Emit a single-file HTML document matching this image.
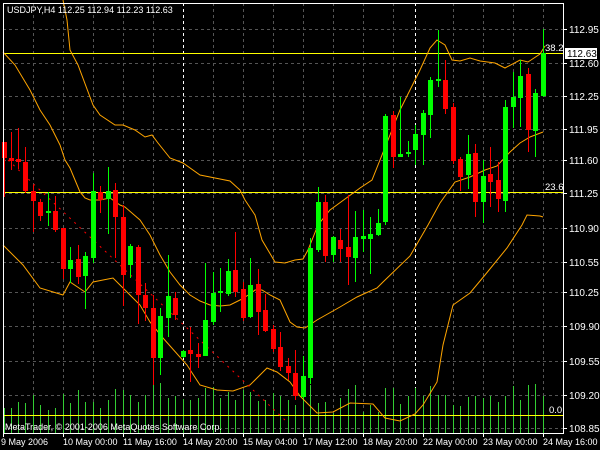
<!DOCTYPE html>
<html><head><meta charset="utf-8"><style>
html,body{margin:0;padding:0;background:#000;width:600px;height:450px;overflow:hidden}
svg{display:block}
text{font-family:"Liberation Sans",sans-serif;fill:#fff}
</style></head><body>
<svg width="600" height="450" viewBox="0 0 600 450" xmlns="http://www.w3.org/2000/svg">
<rect width="600" height="450" fill="#000"/>
<g stroke="#555" stroke-width="1" stroke-dasharray="3,3" shape-rendering="crispEdges">
<path d="M3 29.5H563M3 63.5H563M3 96.5H563M3 129.5H563M3 160.5H563M3 193.5H563M3 228.5H563M3 262.5H563M3 292.5H563M3 326.5H563M3 361.5H563M3 395.5H563M3 428.5H563"/>
<path d="M33.5 3V433M63.5 3V433M93.5 3V433M123.5 3V433M153.5 3V433M213.5 3V433M243.5 3V433M273.5 3V433M303.5 3V433M333.5 3V433M363.5 3V433M393.5 3V433M453.5 3V433M483.5 3V433M513.5 3V433M543.5 3V433"/>
</g>
<g stroke="#fff" stroke-width="1" stroke-dasharray="3,3" shape-rendering="crispEdges">
<path d="M183.5 3V433M415.5 3V433"/>
</g>
<g stroke="#32cd32" stroke-width="1" shape-rendering="crispEdges">
<path d="M4.5 408V433M11.5 408V433M18.5 402V433M25.5 403V433M33.5 395V433M40.5 405V433M48.5 410V433M55.5 408V433M63.5 394V433M70.5 403V433M78.5 390V433M85.5 402V433M93.5 402V433M100.5 408V433M108.5 400V433M115.5 389V433M123.5 390V433M130.5 395V433M138.5 402V433M145.5 395V433M153.5 383V433M160.5 383V433M168.5 398V433M175.5 396V433M183.5 399V433M190.5 400V433M198.5 398V433M205.5 388V433M213.5 387V433M220.5 398V433M228.5 392V433M235.5 400V433M243.5 390V433M250.5 392V433M258.5 401V433M265.5 400V433M273.5 393V433M280.5 396V433M288.5 400V433M295.5 405V433M303.5 356V433M310.5 385V433M318.5 403V433M325.5 402V433M333.5 413V433M340.5 398V433M348.5 389V433M355.5 385V433M363.5 412V433M370.5 405V433M378.5 412V433M385.5 388V433M393.5 388V433M400.5 404V433M408.5 396V433M415.5 388V433M423.5 396V433M430.5 386V433M438.5 395V433M445.5 395V433M453.5 405V433M460.5 406V433M468.5 397V433M475.5 396V433M483.5 398V433M490.5 396V433M498.5 402V433M505.5 396V433M513.5 386V433M520.5 400V433M528.5 385V433M535.5 384V433M543.5 396V433"/>
</g>
<g stroke="#ffff00" stroke-width="1" shape-rendering="crispEdges">
<path d="M3 53.5H563M3 192.5H563M3 415.5H563"/>
</g>
<g fill="none" stroke="#ffa500" stroke-width="1">
<polyline points="63,0 67,20 70,50 78,65 93,105 100,115 115,125 123,125 135,130 145,137 152,135 158,143 170,158 183,163 200,175 215,178 230,181 240,190 245,200 255,215 262,240 275,262 285,263 295,260 303,259 308,250 318,225 330,210 345,199 360,188 372,180 380,160 390,135 400,110 410,90 420,70 430,48 437,40 445,45 452,60 460,61 470,58 480,61 495,63 505,68 520,60 528,62 540,54 545,46"/>
<polyline points="3,52 15,65 30,90 40,110 50,125 60,145 65,160 70,168 75,180 80,192 85,198 90,200 100,200 110,198 120,205 125,207 140,220 150,235 160,255 170,272 180,285 183,288 190,295 200,301 210,305 220,306 230,305 240,300 250,294 255,290 262,290 270,295 280,300 290,322 297,327 305,328 317,320 340,307 357,297 377,288 383,282 410,256 428,225 440,203 455,182 470,177 485,170 497,166 510,152 520,143 530,137 543,132"/>
<polyline points="3,245 23,265 40,288 63,295 70,282 85,292 93,282 113,278 123,288 140,305 150,322 163,338 187,365 200,385 217,390 233,391 250,385 267,368 277,372 290,382 300,396 317,413 333,412 350,403 373,404 385,418 400,421 415,414 423,405 437,382 443,345 448,325 453,305 470,293 485,275 507,248 522,225 527,215 540,216 543,217"/>
</g>
<line x1="8" y1="160" x2="285" y2="420" stroke="#ff0000" stroke-width="1" stroke-dasharray="2,5"/>
<g stroke-width="1" shape-rendering="crispEdges">
<g stroke="#ff0000" fill="#ff0000">
<path d="M4.5 142V197M11.5 132V170M18.5 128V169M25.5 147V193M33.5 185V232M40.5 199V221M55.5 196V232M63.5 228V279M78.5 245V284M100.5 186V213M115.5 183V258M123.5 205V306M138.5 245V324M145.5 283V321M153.5 295V385M175.5 292V320M190.5 327V382M198.5 343V368M235.5 232V297M243.5 282V321M258.5 269V335M265.5 294V332M273.5 325V352M280.5 332V371M288.5 358V380M295.5 350V400M325.5 195V262M340.5 229V262M348.5 195V285M393.5 111V168M445.5 60V114M453.5 103V164M460.5 157V191M475.5 144V217M490.5 147V207M498.5 162V212M528.5 68V152"/>
</g>
<g stroke="#00ff00" fill="#00ff00">
<path d="M48.5 192V226M70.5 247V283M85.5 252V309M93.5 173V263M108.5 167V234M130.5 244V278M160.5 308V375M168.5 255V337M183.5 350V358M205.5 263V356M213.5 272V325M220.5 268V312M228.5 259V296M250.5 258V318M303.5 356V399M310.5 238V384M318.5 187V252M333.5 236V262M355.5 211V282M363.5 210V252M370.5 217V274M378.5 209V236M385.5 114V225M400.5 97V157M408.5 141V157M415.5 125V165M423.5 110V165M430.5 77V138M438.5 30V87M468.5 135V189M483.5 160V223M505.5 100V212M513.5 72V128M520.5 60V127M535.5 89V157M543.5 29V97"/>
</g>
<g fill="#ff0000">
<rect x="2" y="142" width="5" height="16"/><rect x="9" y="158" width="5" height="3"/><rect x="16" y="159" width="5" height="3"/><rect x="23" y="162" width="5" height="29"/><rect x="31" y="191" width="5" height="10"/><rect x="38" y="202" width="5" height="14"/><rect x="53" y="211" width="5" height="19"/><rect x="61" y="228" width="5" height="41"/><rect x="76" y="259" width="5" height="18"/><rect x="98" y="192" width="5" height="8"/><rect x="113" y="190" width="5" height="27"/><rect x="121" y="217" width="5" height="58"/><rect x="136" y="247" width="5" height="48"/><rect x="143" y="295" width="5" height="13"/><rect x="151" y="308" width="5" height="50"/><rect x="173" y="298" width="5" height="17"/><rect x="188" y="350" width="5" height="4"/><rect x="196" y="354" width="5" height="3"/><rect x="233" y="270" width="5" height="22"/><rect x="241" y="289" width="5" height="29"/><rect x="256" y="284" width="5" height="28"/><rect x="263" y="310" width="5" height="21"/><rect x="271" y="329" width="5" height="20"/><rect x="278" y="347" width="5" height="20"/><rect x="286" y="366" width="5" height="7"/><rect x="293" y="373" width="5" height="23"/><rect x="323" y="202" width="5" height="54"/><rect x="338" y="240" width="5" height="9"/><rect x="346" y="247" width="5" height="10"/><rect x="391" y="115" width="5" height="42"/><rect x="443" y="80" width="5" height="29"/><rect x="451" y="107" width="5" height="54"/><rect x="458" y="159" width="5" height="18"/><rect x="473" y="153" width="5" height="49"/><rect x="488" y="174" width="5" height="8"/><rect x="496" y="180" width="5" height="19"/><rect x="526" y="74" width="5" height="56"/>
</g>
<g fill="#00ff00">
<rect x="46" y="211" width="5" height="2"/><rect x="68" y="260" width="5" height="9"/><rect x="83" y="256" width="5" height="20"/><rect x="91" y="191" width="5" height="67"/><rect x="106" y="191" width="5" height="8"/><rect x="128" y="246" width="5" height="19"/><rect x="158" y="316" width="5" height="42"/><rect x="166" y="296" width="5" height="22"/><rect x="181" y="351" width="5" height="6"/><rect x="203" y="320" width="5" height="36"/><rect x="211" y="293" width="5" height="29"/><rect x="218" y="291" width="5" height="2"/><rect x="226" y="271" width="5" height="23"/><rect x="248" y="285" width="5" height="32"/><rect x="301" y="376" width="5" height="21"/><rect x="308" y="248" width="5" height="130"/><rect x="316" y="202" width="5" height="48"/><rect x="331" y="237" width="5" height="18"/><rect x="353" y="237" width="5" height="21"/><rect x="361" y="236" width="5" height="3"/><rect x="368" y="234" width="5" height="5"/><rect x="376" y="223" width="5" height="12"/><rect x="383" y="116" width="5" height="106"/><rect x="398" y="154" width="5" height="3"/><rect x="406" y="152" width="5" height="2"/><rect x="413" y="134" width="5" height="16"/><rect x="421" y="113" width="5" height="22"/><rect x="428" y="80" width="5" height="35"/><rect x="436" y="79" width="5" height="2"/><rect x="466" y="154" width="5" height="21"/><rect x="481" y="176" width="5" height="26"/><rect x="503" y="107" width="5" height="94"/><rect x="511" y="97" width="5" height="10"/><rect x="518" y="76" width="5" height="22"/><rect x="533" y="93" width="5" height="38"/><rect x="541" y="53" width="5" height="43"/>
</g>
</g>
<g stroke="#fff" stroke-width="1" fill="none" shape-rendering="crispEdges">
<path d="M3.5 3V433.5H563.5V3.5H3"/>
<path d="M3.5 433V437M63.5 433V437M123.5 433V437M183.5 433V437M243.5 433V437M303.5 433V437M363.5 433V437M423.5 433V437M483.5 433V437M543.5 433V437"/>
<path d="M563 29.5H567M563 63.5H567M563 96.5H567M563 129.5H567M563 160.5H567M563 193.5H567M563 228.5H567M563 262.5H567M563 292.5H567M563 326.5H567M563 361.5H567M563 395.5H567M563 428.5H567"/>
</g>
<text x="7" y="13" font-size="9">USDJPY,H4  112.25 112.94 112.23 112.63</text>
<text x="5" y="430" font-size="9">MetaTrader, © 2001-2006 MetaQuotes Software Corp.</text>
<g font-size="9.5">
<text x="545" y="51">38.2</text><text x="545" y="190">23.6</text><text x="549" y="413">0.0</text>
</g>
<g font-size="10">
<text x="569" y="33">112.95</text>
<text x="569" y="67">112.60</text>
<text x="569" y="100">112.25</text>
<text x="569" y="133">111.95</text>
<text x="569" y="164">111.60</text>
<text x="569" y="197">111.25</text>
<text x="569" y="232">110.90</text>
<text x="569" y="266">110.55</text>
<text x="569" y="296">110.25</text>
<text x="569" y="330">109.90</text>
<text x="569" y="365">109.55</text>
<text x="569" y="399">109.20</text>
<text x="569" y="432">108.85</text>
</g>
<rect x="565" y="48" width="32" height="11" fill="#fff"/>
<text x="567" y="57" font-size="10" style="fill:#000">112.63</text>
<g font-size="9">
<text x="1" y="445">9 May 2006</text>
<text x="63" y="445">10 May 00:00</text>
<text x="123" y="445">11 May 16:00</text>
<text x="183" y="445">14 May 20:00</text>
<text x="243" y="445">15 May 04:00</text>
<text x="303" y="445">17 May 12:00</text>
<text x="363" y="445">18 May 20:00</text>
<text x="423" y="445">22 May 00:00</text>
<text x="483" y="445">23 May 00:00</text>
<text x="543" y="445">24 May 16:00</text>
</g>
</svg>
</body></html>
